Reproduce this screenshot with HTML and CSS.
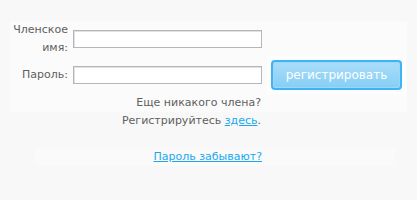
FILE: index.html
```html
<!DOCTYPE html>
<html lang="ru">
<head>
    <meta charset="UTF-8">
    <title>Вход</title>
    <link rel="stylesheet" href="styles.css">
</head>
<body>
    <div class="login">
        <form class="login-form">
            <label class="field-label" for="member">Членское имя:</label>
            <input class="field" type="text" id="member">
            <span></span>

            <label class="field-label" for="pass">Пароль:</label>
            <input class="field" type="password" id="pass">
            <div class="btn-wrap">
                <button type="button" class="btn-register">регистрировать</button>
            </div>
        </form>
        <div class="notes">
            <p>Еще никакого члена?</p>
            <p>Регистрируйтесь <a href="#">здесь</a>.</p>
        </div>
    </div>
    <div class="forgot">
        <a href="#">Пароль забывают?</a>
    </div>
</body>
</html>
```

FILE: styles.css
```css
body {
    margin: 0;
    padding: 26px 0 0 0;
    background-color: #f8f8f8;
    font-family: "DejaVu Sans", Verdana, sans-serif;
    font-size: 11px;
    color: #606060;
}
.login {
    margin-left: 10px;
    width: 397px;
    height: 91px;
    background-color: #fbfbfb;
}
.login-form {
    display: grid;
    grid-template-columns: 63px 189px 145px;
    grid-template-rows: 36px 30px;
    row-gap: 3px;
    align-items: center;
    margin-top: -5px;
}
.field-label {
    text-align: right;
    padding-right: 5px;
    line-height: 18px;
}
.field {
    box-sizing: border-box;
    width: 189px;
    height: 18px;
    margin: 0;
    border: 1px solid #b3b7bb;
    box-shadow: inset 1px 1px 0 #dfe1e3;
    background-color: #fff;
    font-family: inherit;
    font-size: 11px;
}
.btn-wrap {
    margin-left: 5px;
    width: 139px;
    height: 38px;
    display: flex;
    align-items: center;
    justify-content: center;
    background-color: #fdfdfd;
}
.btn-register {
    width: 131px;
    height: 30px;
    border: 2px solid #3eb4f4;
    border-radius: 4px;
    background: linear-gradient(#a9ddf9, #86cef6);
    box-shadow: inset 0 0 0 1px #9dd7f8;
    color: #fff;
    font-family: inherit;
    font-size: 12px;
    padding: 0;
}
.notes {
    width: 251px;
    text-align: right;
    margin-top: 4px;
}
.notes p {
    margin: 0;
    line-height: 18px;
}
a {
    color: #1aa9ef;
}
.forgot {
    margin: 36px 0 0 35px;
    width: 360px;
    height: 18px;
    line-height: 18px;
    background-color: #fafafa;
}
.forgot a {
    display: block;
    width: 227px;
    text-align: right;
}
```
